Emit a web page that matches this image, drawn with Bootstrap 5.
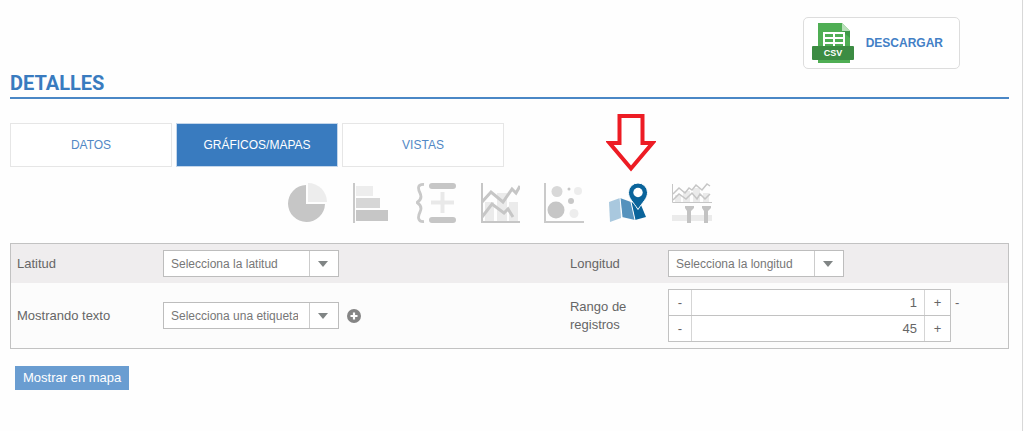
<!DOCTYPE html>
<html lang="es">
<head>
<meta charset="utf-8">
<meta name="viewport" content="width=device-width, initial-scale=1">
<title>Detalles</title>
<link href="https://cdn.jsdelivr.net/npm/bootstrap@5.3.0/dist/css/bootstrap.min.css" rel="stylesheet">
<style>
  :root { --azul: #397bbf; }
  body { font-family: "Liberation Sans", Arial, sans-serif; font-size: 13px; line-height: 18px; color: #666; background: #fefefe; }
  .pagina { min-height: 100vh; margin-right: 1px; padding: 17px 13px 16px 10px; border-right: 1px solid #d8d8d8; }
  .descarga { margin-right: 49px; padding: 0 16px 0 8px; height: 52px; border: 1px solid #ddd; border-radius: 5px; background: #fff; color: #4380c6; font-size: 12px; font-weight: 700; }
  .descarga:hover { border-color: var(--azul); color: var(--azul); }
  .titulo { margin: 2px 0 24px; padding-bottom: 2px; border-bottom: 2px solid #4a87c6; color: var(--azul); font: 700 20px/24px Roboto, sans-serif; }
  .pestanas { gap: 4px; }
  .pestanas .nav-link { width: 162px; height: 44px; padding: 0; border: 1px solid #e6e6e6; border-radius: 0; background: #fff; color: #5288c5; font-size: 12px; }
  .pestanas .nav-link.active { background: var(--azul); border-color: #c4d6ea; color: #fff; }
  .tipos { gap: 24px; margin: 16px 20px 20px 0; }
  .tipos button { width: 40px; height: 40px; padding: 0; border: 0; background: none; }
  .tipos svg { display: block; }
  .flecha { left: -2px; bottom: 51px; }
  .panel { border: 1px solid #c2c2c2; background: #fcfcfc; }
  .fila { padding-left: 6px; }
  .fila-a { min-height: 39px; background: #efedee; }
  .fila-b { min-height: 65px; }
  .izq { flex: 0 0 55.8%; max-width: 55.8%; }
  .izq .rotulo { width: 146px; }
  .der { flex: 1 1 0; }
  .der .rotulo { width: 98px; padding-right: 12px; }
  .lista { width: 176px; height: 27px; padding: 0 40px 0 7px; border: 1px solid #bdbdbd; border-radius: 0; color: #777; font-size: 12px; line-height: 18px; background: #fff url("data:image/svg+xml,%3Csvg xmlns='http://www.w3.org/2000/svg' width='29' height='25'%3E%3Cpath d='M0 0h1v25H0z' fill='%23ccc'/%3E%3Cpath d='M9 10h10l-5 6z' fill='%23808585'/%3E%3C/svg%3E") right center / 29px 25px no-repeat; text-overflow: clip; }
  .contador { width: 283px; height: 27px; border: 1px solid #c2c2c2; background: #fff; }
  .contador + .contador { margin-top: -1px; }
  .contador button { padding: 0; border: 0; background: none; color: #666; font-size: 13px; }
  .contador .menos { width: 22px; }
  .contador .mas { width: 25px; }
  .contador input { flex: 1 1 0; min-width: 0; padding: 0 7px; border: 0; border-left: 1px solid #d5d5d5; border-right: 1px solid #d5d5d5; color: #666; text-align: right; background: #fff; }
  .guion { height: 27px; line-height: 27px; }
  .mostrar { margin: 17px 0 0 5px; padding: 3px 8px; border: 0; border-radius: 0; background: #6a9dd1; color: #fff; font-size: 13px; line-height: 18px; }
</style>
</head>
<body>
<main class="pagina">
  <div class="d-flex justify-content-end">
    <button type="button" class="btn descarga d-flex align-items-center">
      <svg width="42" height="42" viewBox="0 0 42 42" aria-hidden="true">
        <path d="M6 1h24l8 8v32H6z" fill="#4fae54"/><path d="M30 1l8 8h-8z" fill="#b9dfb9"/><path d="M30 9h8v7z" fill="#3f9848"/>
        <path d="M11 10h22v15H11z" fill="#fff"/>
        <path d="M13 12h8v3h-8zM23 12h8v3h-8zM13 17h8v3h-8zM23 17h8v3h-8zM13 22h8v3h-8zM23 22h8v3h-8z" fill="#4fae54"/>
        <rect y="24" width="42" height="14" rx="1" fill="#3c8c43"/>
        <text x="21" y="34" text-anchor="middle" font-family="Liberation Sans, sans-serif" font-size="9" font-weight="700" fill="#fff">CSV</text>
      </svg>
      <span class="ms-2 ps-1">DESCARGAR</span>
    </button>
  </div>

  <h1 class="titulo">DETALLES</h1>

  <nav class="nav pestanas">
    <a class="nav-link d-flex align-items-center justify-content-center" href="#datos">DATOS</a>
    <a class="nav-link active d-flex align-items-center justify-content-center" href="#graficos" aria-current="page">GRÁFICOS/MAPAS</a>
    <a class="nav-link d-flex align-items-center justify-content-center" href="#vistas">VISTAS</a>
  </nav>

  <div class="tipos d-flex justify-content-center">
    <button type="button" aria-label="Circular">
      <svg width="40" height="40" viewBox="0 0 40 40"><path d="M18 2A18.500 18.500 0 1 0 37 21H18z" fill="#c6c6c6"/><path d="M20 0A19 19 0 0 1 39 19H20z" fill="#ededed"/></svg>
    </button>
    <button type="button" aria-label="Barras">
      <svg width="40" height="40" viewBox="0 0 40 40"><path d="M1 0h2v40H1z" fill="#c9c9c9"/><path d="M4 3h17v10H4z" fill="#ededed"/><path d="M4 15h24v10H4z" fill="#d6d6d6"/><path d="M4 27h32v11H4z" fill="#c6c6c6"/></svg>
    </button>
    <button type="button" aria-label="Agregado">
      <svg width="40" height="40" viewBox="0 0 40 40"><path d="M8 1.500C1 1 2 6 4 10S5 17 1 19.500C5 22 6 25 4 29S1 39 8 38.500" fill="none" stroke="#c9c9c9" stroke-width="2.800"/><path d="M16 3h21M16 37h21" stroke="#c6c6c6" stroke-width="6" stroke-linecap="round"/><path d="M26.500 9v21M15 19.500h23" stroke="#e9e9e9" stroke-width="4"/></svg>
    </button>
    <button type="button" aria-label="Líneas">
      <svg width="40" height="40" viewBox="0 0 40 40"><path d="M5 19h9v19H5zM17 10h10v28H17zM29 19h9v19h-9z" fill="#ebebeb"/><path d="M2 0v39h38" fill="none" stroke="#c6c6c6" stroke-width="2"/><path d="M2 19L11 9L23 19L32 6L36 10L40 3M2 34L12 21L24 30L28 26L33 34" fill="none" stroke="#c6c6c6" stroke-width="3"/></svg>
    </button>
    <button type="button" aria-label="Burbujas">
      <svg width="40" height="40" viewBox="0 0 40 40"><path d="M1 0v39h39" fill="none" stroke="#cacaca" stroke-width="2"/><circle cx="13" cy="8.500" r="5.500" fill="#d8d8d8"/><circle cx="25" cy="6" r="1.500" fill="#c6c6c6"/><circle cx="34" cy="8" r="4" fill="#ededed"/><circle cx="27" cy="18" r="3" fill="#c8c8c8"/><circle cx="12" cy="27" r="8.500" fill="#c6c6c6"/><circle cx="30" cy="30.500" r="4.500" fill="#ededed"/></svg>
    </button>
    <div class="position-relative d-flex">
      <button type="button" aria-label="Mapa" aria-pressed="true">
        <svg width="40" height="40" viewBox="0 0 40 40"><path d="M1 19L12 15L13 35L2 39z" fill="#a9c8de"/><path d="M12 15L23 19L27 37L14 34z" fill="#5592bd"/><path d="M23 19L33 22L38 34L27 37z" fill="#0a649b"/><path d="M12 15L14 34M23 19L27 37" stroke="#fff" fill="none"/><path d="M30 0a9.500 9.500 0 0 1 9.500 9.500c0 6-4.500 9-9.500 17c-5-8-9.500-11-9.500-17A9.500 9.500 0 0 1 30 0z" fill="#0a649b" stroke="#fff" stroke-width="1"/><circle cx="30" cy="9.500" r="4.700" fill="#fff"/></svg>
      </button>
      <svg class="flecha position-absolute" width="50" height="58" viewBox="0 0 50 58" aria-hidden="true"><path d="M13.500 2H36.500V29H46.500L25 54.500L3.500 29H13.500z" fill="#fff" stroke="#ed1c24" stroke-width="4"/></svg>
    </div>
    <button type="button" aria-label="Rango temporal">
      <svg width="40" height="40" viewBox="0 0 40 40"><path d="M3 12h6v7H3zM11 8h7v11h-7zM21 5h7v14h-7zM31 10h6v9h-6z" fill="#ebebeb"/><path d="M0.500 1v18.500h40" fill="none" stroke="#c6c6c6"/><path d="M1 11L7 5L13 10L17 5L20 7L24 2L30 7L35 1L38 3M1 17L7 11L14 16L20 10L25 16L28 11L33 16L38 11" fill="none" stroke="#c6c6c6" stroke-width="1.500"/><path d="M0 32h40v6H0z" fill="#ebebeb"/><path d="M13 23h9v2l-3 3v12h-4V28l-2-3zM30 23h9v2l-3 3v12h-4V28l-2-3z" fill="#c3c3c3"/></svg>
    </button>
  </div>

  <form class="panel">
    <div class="fila fila-a d-flex align-items-center">
      <div class="izq d-flex align-items-center">
        <label class="rotulo" for="latitud">Latitud</label>
        <select class="form-select lista" id="latitud"><option>Selecciona la latitud</option></select>
      </div>
      <div class="der d-flex align-items-center">
        <label class="rotulo" for="longitud">Longitud</label>
        <select class="form-select lista" id="longitud"><option>Selecciona la longitud</option></select>
      </div>
    </div>
    <div class="fila fila-b d-flex align-items-center">
      <div class="izq d-flex align-items-center">
        <label class="rotulo" for="etiqueta">Mostrando texto</label>
        <select class="form-select lista" id="etiqueta"><option>Selecciona una etiqueta</option></select>
        <button type="button" class="btn border-0 p-0 ms-2 d-flex" aria-label="Añadir">
          <svg width="14" height="14" viewBox="0 0 14 14"><circle cx="7" cy="7" r="7" fill="#858585"/><path d="M7 3.500v7M3.500 7h7" stroke="#fff" stroke-width="2.200"/></svg>
        </button>
      </div>
      <div class="der d-flex align-items-center">
        <label class="rotulo" for="desde">Rango de registros</label>
        <div>
          <div class="contador d-flex"><button type="button" class="menos">-</button><input id="desde" type="text" inputmode="numeric" value="1"><button type="button" class="mas">+</button></div>
          <div class="contador d-flex"><button type="button" class="menos">-</button><input type="text" inputmode="numeric" value="45" aria-label="Hasta"><button type="button" class="mas">+</button></div>
        </div>
        <span class="guion align-self-start ms-1">-</span>
      </div>
    </div>
  </form>
  <button type="submit" class="btn mostrar">Mostrar en mapa</button>
</main>
<script src="https://cdn.jsdelivr.net/npm/bootstrap@5.3.0/dist/js/bootstrap.bundle.min.js"></script>
</body>
</html>
